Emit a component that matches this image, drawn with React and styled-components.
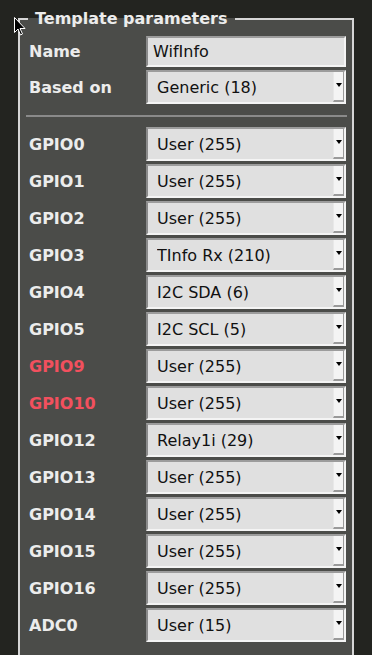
import React from "react";
import styled, { createGlobalStyle } from "styled-components";

const GlobalStyle = createGlobalStyle`
  html, body {
    margin: 0;
    padding: 0;
    background: #232420;
    font-family: "DejaVu Sans", "Liberation Sans", sans-serif;
  }
`;

const Page = styled.div`
  position: relative;
  width: 372px;
  height: 655px;
  overflow: hidden;
  padding: 0 18px;
  box-sizing: border-box;
`;

const Fieldset = styled.fieldset`
  margin: 9px 0 0 0;
  width: 336px;
  box-sizing: border-box;
  background: #4b4c49;
  border: 2px solid #d6d6d6;
  border-radius: 0;
  padding: 8px 6px 40px 9px;
`;

const Legend = styled.legend`
  margin-left: -1px;
  padding: 0 7px;
  color: #ececec;
  font-weight: bold;
  font-size: 16px;
  line-height: 19px;
`;

const Grid = styled.div`
  display: grid;
  grid-template-columns: 1fr 200px;
  row-gap: 3px;
  align-items: center;
`;

const Label = styled.div`
  color: ${p => (p.$warn ? "#f2505e" : "#ececec")};
  font-weight: bold;
  font-size: 16px;
  line-height: 19px;
`;

const Field = styled.div`
  box-sizing: border-box;
  height: ${p => p.$h}px;
  display: flex;
  align-items: center;
  background: #e0e0e0;
  border-style: solid;
  border-width: 2px;
  border-color: #9c9c9c #f4f4f4 #f4f4f4 #8a8a8a;
  color: #111;
  font-size: 16px;
  padding-left: ${p => p.$pad}px;
`;

const Value = styled.span`
  flex: 1;
  white-space: nowrap;
  overflow: hidden;
`;

const ArrowBox = styled.div`
  align-self: stretch;
  width: 11px;
  box-sizing: border-box;
  background: #f4f4f4;
  border-left: 1px solid #e8e8e8;
  border-right: 1px solid #9a9a9a;
  border-bottom: 2px solid #9a9a9a;
  display: flex;
  align-items: center;
  justify-content: center;
  padding-bottom: 2px;
`;

const Rule = styled.div`
  grid-column: 1 / -1;
  height: 2px;
  background: #8a8a8a;
  margin: 8px -1px 7px -3px;
`;

const Cursor = styled.svg`
  position: absolute;
  left: 14px;
  top: 17px;
`;

const Select = ({ value }) => (
  <Field $h={34} $pad={9}>
    <Value>{value}</Value>
    <ArrowBox>
      <svg width="6" height="5" viewBox="0 0 6 5">
        <polygon points="0,0 6,0 3,4" fill="#000" />
      </svg>
    </ArrowBox>
  </Field>
);

const pins = [
  ["GPIO0", "User (255)"],
  ["GPIO1", "User (255)"],
  ["GPIO2", "User (255)"],
  ["GPIO3", "TInfo Rx (210)"],
  ["GPIO4", "I2C SDA (6)"],
  ["GPIO5", "I2C SCL (5)"],
  ["GPIO9", "User (255)", true],
  ["GPIO10", "User (255)", true],
  ["GPIO12", "Relay1i (29)"],
  ["GPIO13", "User (255)"],
  ["GPIO14", "User (255)"],
  ["GPIO15", "User (255)"],
  ["GPIO16", "User (255)"],
  ["ADC0", "User (15)"],
];

export default function App() {
  return (
    <Page>
      <GlobalStyle />
      <Fieldset>
        <Legend>Template parameters</Legend>
        <Grid>
          <Label>Name</Label>
          <Field $h={31} $pad={5}>
            <Value>WifInfo</Value>
          </Field>
          <Label>Based on</Label>
          <Select value="Generic (18)" />
          <Rule />
          {pins.map(([name, val, warn]) => (
            <React.Fragment key={name}>
              <Label $warn={warn}>{name}</Label>
              <Select value={val} />
            </React.Fragment>
          ))}
        </Grid>
      </Fieldset>
      <Cursor width="12" height="19" viewBox="0 0 12 19">
        <path d="M0.5 0.5 L0.5 15.5 L4 12 L6.5 18 L8.5 17 L6 11.5 L11 11.5 Z" fill="#000" stroke="#fff" strokeWidth="1" />
      </Cursor>
    </Page>
  );
}
